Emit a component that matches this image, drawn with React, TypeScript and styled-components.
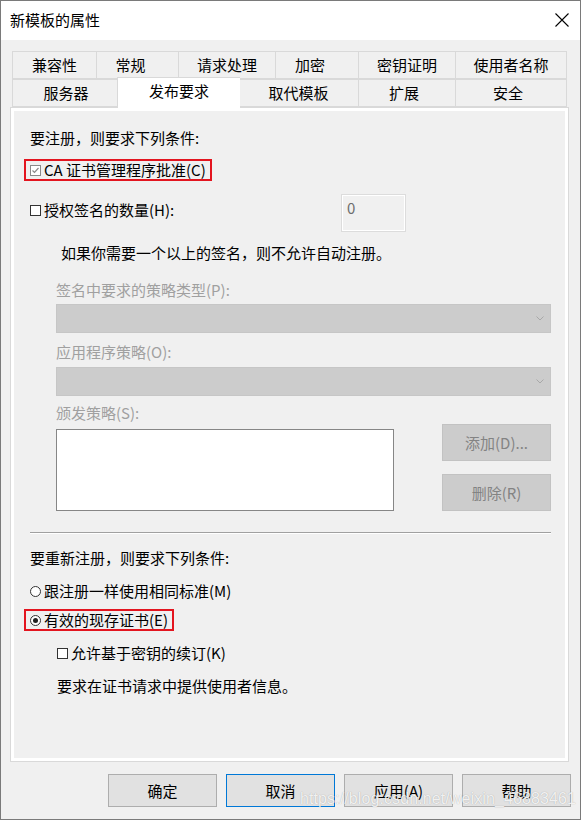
import React from 'react';
import styled, { createGlobalStyle } from 'styled-components';

const GlobalStyle = createGlobalStyle`
  html, body {
    margin: 0;
    padding: 0;
    background: #ffffff;
  }
  * {
    box-sizing: border-box;
  }
`;

const FONT = `"Noto Sans CJK SC", "Noto Sans", sans-serif`;

const Window = styled.div`
  position: relative;
  width: 581px;
  height: 820px;
  display: flex;
  flex-direction: column;
  border: 1px solid #7a7a7a;
  font-family: ${FONT};
  font-size: 15px;
  color: #000;
  background: #f0f0f0;
  overflow: hidden;
`;

const TitleBar = styled.div`
  height: 39px;
  flex: 0 0 39px;
  background: #fff;
  display: flex;
  align-items: center;
  justify-content: space-between;
  padding: 0 11px 2px 9px;
  line-height: 20px;
`;

const Body = styled.div`
  flex: 1;
  display: flex;
  flex-direction: column;
  padding: 11px 11px 0 9px;
`;

const TabStrip = styled.div`
  margin: 0 2px;
  display: flex;
  flex-direction: column;
`;

const TabRow = styled.div`
  display: flex;
  align-items: flex-start;
`;

const Tab = styled.div<{ $w: number; $active?: boolean; $shift?: number }>`
  position: relative;
  flex: 0 0 ${({ $w, $active }) => ($active ? $w + 4 : $w)}px;
  height: ${({ $active }) => ($active ? 31 : 28)}px;
  margin: ${({ $active }) => ($active ? '-2px -2px -1px -2px' : '0')};
  z-index: ${({ $active }) => ($active ? 2 : 1)};
  background: ${({ $active }) => ($active ? '#ffffff' : '#f0f0f0')};
  border: 1px solid #d9d9d9;
  border-bottom: ${({ $active }) => ($active ? 'none' : '1px solid #d9d9d9')};
  border-right: none;
  display: flex;
  justify-content: center;
  align-items: ${({ $active }) => ($active ? 'flex-start' : 'center')};
  padding-top: ${({ $active }) => ($active ? 2 : 0)}px;
  padding-right: ${({ $shift }) => ($shift ?? 0) * 2}px;
  line-height: 22px;
  white-space: nowrap;
  &:last-child {
    border-right: 1px solid #d9d9d9;
  }
`;

const Panel = styled.div`
  height: 655px;
  flex-shrink: 0;
  border: 1px solid #d9d9d9;
  box-shadow: inset 0 0 0 3px #ffffff;
  background: #f0f0f0;
  padding: 20px 17px 0 19px;
  display: flex;
  flex-direction: column;
  line-height: 20px;
`;

const Line = styled.div<{ $mt?: number; $ml?: number; $muted?: boolean }>`
  margin-top: ${({ $mt }) => $mt ?? 0}px;
  margin-left: ${({ $ml }) => $ml ?? 0}px;
  height: 20px;
  color: ${({ $muted }) => ($muted ? '#a0a0a0' : '#000')};
  white-space: nowrap;
`;

const Option = styled.div<{ $mt?: number; $ml?: number; $marked?: boolean }>`
  display: flex;
  align-items: center;
  gap: 3px;
  align-self: flex-start;
  margin-top: ${({ $mt }) => $mt ?? 0}px;
  margin-left: ${({ $ml, $marked }) => ($ml ?? 0) - ($marked ? 6 : 0)}px;
  height: ${({ $marked }) => ($marked ? 22 : 20)}px;
  padding: 0 ${({ $marked }) => ($marked ? 4 : 0)}px;
  border: ${({ $marked }) => ($marked ? '2px solid #e3151f' : 'none')};
  white-space: nowrap;
`;

const Box = styled.span<{ $checked?: boolean }>`
  position: relative;
  display: inline-block;
  width: 11px;
  height: 11px;
  flex: 0 0 11px;
  border: 1px solid ${({ $checked }) => ($checked ? '#8a8a8a' : '#333')};
  background: #fff;
`;

const Round = styled.span<{ $on?: boolean }>`
  display: inline-flex;
  align-items: center;
  justify-content: center;
  width: 11px;
  height: 11px;
  flex: 0 0 11px;
  border: 1px solid #333;
  border-radius: 50%;
  background: #fff;
  &::after {
    content: '';
    display: ${({ $on }) => ($on ? 'block' : 'none')};
    width: 5px;
    height: 5px;
    border-radius: 50%;
    background: #222;
  }
`;

const CountRow = styled.div`
  margin-top: 13px;
  height: 38px;
  display: flex;
  align-items: flex-start;
`;

const CountLabel = styled.div`
  flex: 0 0 311px;
  padding-top: 4px;
  display: flex;
  align-items: center;
  gap: 3px;
  height: 28px;
`;

const NumberBox = styled.div`
  width: 65px;
  height: 38px;
  border: 1px solid #dcdcdc;
  box-shadow: inset 0 0 0 1px #ffffff;
  background: #f0f0f0;
  color: #6d6d6d;
  padding: 3px 0 0 5px;
  line-height: 20px;
`;

const Indent = styled.div`
  margin-left: 26px;
  display: flex;
  flex-direction: column;
`;

const Select = styled.div<{ $mt: number }>`
  margin-top: ${({ $mt }) => $mt}px;
  width: 495px;
  height: 29px;
  background: #cccccc;
  border: 1px solid #c6c6c6;
  display: flex;
  align-items: center;
  justify-content: flex-end;
  padding-right: 6px;
`;

const PolicyRow = styled.div`
  margin-top: 1px;
  display: flex;
  align-items: flex-start;
`;

const ListBox = styled.div`
  margin-top: 5px;
  width: 338px;
  height: 82px;
  background: #fff;
  border: 1px solid #868686;
`;

const SideButtons = styled.div`
  margin-left: 48px;
  display: flex;
  flex-direction: column;
  gap: 13px;
`;

const Button = styled.div<{ $disabled?: boolean; $focused?: boolean; $h?: number }>`
  width: 109px;
  height: ${({ $h }) => $h ?? 37}px;
  flex-shrink: 0;
  display: flex;
  align-items: center;
  justify-content: center;
  background: ${({ $disabled }) => ($disabled ? '#cccccc' : '#e1e1e1')};
  border: 1px solid
    ${({ $disabled, $focused }) => ($focused ? '#0078d7' : $disabled ? '#c2c2c2' : '#adadad')};
  color: ${({ $disabled }) => ($disabled ? '#838383' : '#000')};
  white-space: nowrap;
`;

const Separator = styled.div`
  margin-top: 21px;
  height: 2px;
  border-top: 1px solid #a0a0a0;
  border-bottom: 1px solid #ffffff;
`;

const Footer = styled.div`
  margin-top: 12px;
  margin-right: -2px;
  display: flex;
  justify-content: flex-end;
  gap: 9px;
  line-height: 20px;
`;

const Watermark = styled.div`
  position: absolute;
  left: 299px;
  top: 789px;
  font-family: "Liberation Sans", Arial, sans-serif;
  font-size: 16px;
  color: rgba(255, 255, 255, 0.85);
  text-shadow: 0 0 1px rgba(0, 0, 0, 0.3);
  white-space: nowrap;
  letter-spacing: 0.1px;
  pointer-events: none;
`;

const CloseIcon = () => (
  <svg width="14" height="14" viewBox="0 0 14 14">
    <path d="M0.5 0.5 L13.5 13.5 M13.5 0.5 L0.5 13.5" stroke="#000" strokeWidth="1.1" fill="none" />
  </svg>
);

const Check = () => (
  <svg
    width="9"
    height="9"
    viewBox="0 0 9 9"
    style={{ position: 'absolute', left: 0, top: 0 }}
  >
    <path d="M1.5 4.5 L3.5 6.5 L7.5 2" stroke="#8a8a8a" strokeWidth="1.2" fill="none" />
  </svg>
);

const Chevron = () => (
  <svg width="8" height="5" viewBox="0 0 8 5">
    <path d="M0.5 0.5 L4 4 L7.5 0.5" stroke="#a8a8a8" strokeWidth="1" fill="none" />
  </svg>
);

type TabDef = { label: string; w: number; active?: boolean; shift?: number };

const rowOne: TabDef[] = [
  { label: '兼容性', w: 84 },
  { label: '常规', w: 82, shift: 7 },
  { label: '请求处理', w: 97 },
  { label: '加密', w: 83, shift: 7 },
  { label: '密钥证明', w: 97 },
  { label: '使用者名称', w: 112 },
];

const rowTwo: TabDef[] = [
  { label: '服务器', w: 107 },
  { label: '发布要求', w: 119, active: true },
  { label: '取代模板', w: 120 },
  { label: '扩展', w: 97, shift: 3 },
  { label: '安全', w: 112, shift: 3 },
];

const App = () => {
  return (
    <>
      <GlobalStyle />
      <Window>
        <TitleBar>
          <span>新模板的属性</span>
          <CloseIcon />
        </TitleBar>
        <Body>
          <TabStrip>
            <TabRow>
              {rowOne.map((t) => (
                <Tab key={t.label} $w={t.w} $shift={t.shift}>
                  {t.label}
                </Tab>
              ))}
            </TabRow>
            <TabRow>
              {rowTwo.map((t) => (
                <Tab key={t.label} $w={t.w} $active={t.active} $shift={t.shift}>
                  {t.label}
                </Tab>
              ))}
            </TabRow>
          </TabStrip>
          <Panel>
            <Line>要注册，则要求下列条件:</Line>
            <Option $mt={11} $marked>
              <Box $checked>
                <Check />
              </Box>
              CA 证书管理程序批准(C)
            </Option>
            <CountRow>
              <CountLabel>
                <Box />
                授权签名的数量(H):
              </CountLabel>
              <NumberBox>0</NumberBox>
            </CountRow>
            <Line $mt={11} $ml={31}>
              如果你需要一个以上的签名，则不允许自动注册。
            </Line>
            <Indent>
              <Line $mt={17} $muted>
                签名中要求的策略类型(P):
              </Line>
              <Select $mt={4}>
                <Chevron />
              </Select>
              <Line $mt={9} $muted>
                应用程序策略(O):
              </Line>
              <Select $mt={5}>
                <Chevron />
              </Select>
              <Line $mt={7} $muted>
                颁发策略(S):
              </Line>
              <PolicyRow>
                <ListBox />
                <SideButtons>
                  <Button $disabled>添加(D)...</Button>
                  <Button $disabled>删除(R)</Button>
                </SideButtons>
              </PolicyRow>
            </Indent>
            <Separator />
            <Line $mt={14}>要重新注册，则要求下列条件:</Line>
            <Option $mt={13}>
              <Round />
              跟注册一样使用相同标准(M)
            </Option>
            <Option $mt={8} $marked>
              <Round $on />
              有效的现存证书(E)
            </Option>
            <Option $mt={12} $ml={27}>
              <Box />
              允许基于密钥的续订(K)
            </Option>
            <Line $mt={13} $ml={27}>
              要求在证书请求中提供使用者信息。
            </Line>
          </Panel>
          <Footer>
            <Button $h={33}>确定</Button>
            <Button $h={33} $focused>
              取消
            </Button>
            <Button $h={33}>应用(A)</Button>
            <Button $h={33}>帮助</Button>
          </Footer>
        </Body>
        <Watermark>https://blog.csdn.net/weixin_46883461</Watermark>
      </Window>
    </>
  );
};

export default App;
